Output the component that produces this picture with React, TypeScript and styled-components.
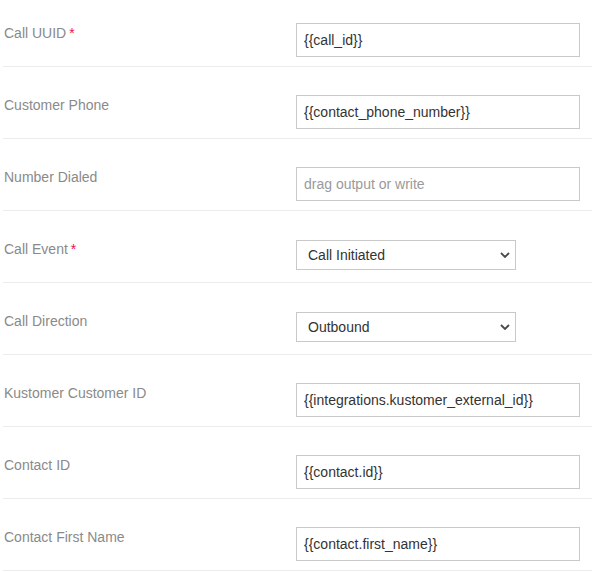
import React from "react";
import styled, { createGlobalStyle } from "styled-components";

const GlobalStyle = createGlobalStyle`
  html, body {
    margin: 0;
    padding: 0;
    background: #fff;
    font-family: "Liberation Sans", Arial, sans-serif;
    overflow: hidden;
  }
`;

const Form = styled.div`
  margin-top: -5px;
  margin-left: 3px;
  width: 589px;
`;

const Row = styled.div`
  display: flex;
  align-items: flex-start;
  box-sizing: border-box;
  height: 72px;
  padding: 28px 12px 0 1px;
  border-bottom: 1px solid #ececec;
`;

const Label = styled.label`
  width: 292px;
  flex-shrink: 0;
  font-size: 14px;
  line-height: 20px;
  color: #8a8a8a;
`;

const Required = styled.span`
  color: #e8114c;
  margin-left: 3px;
`;

const TextInput = styled.input`
  box-sizing: border-box;
  width: 284px;
  height: 34px;
  padding: 0 7px;
  border: 1px solid #c9c9c9;
  border-radius: 0;
  font-family: inherit;
  font-size: 14px;
  color: #333;
  background: #fff;
  outline: none;

  &::placeholder {
    color: #9a9a9a;
  }
`;

const SelectWrap = styled.div`
  position: relative;
  margin-top: 1px;
  width: 220px;
`;

const Select = styled.select`
  box-sizing: border-box;
  width: 220px;
  height: 30px;
  padding: 0 24px 0 11px;
  border: 1px solid #c9c9c9;
  border-radius: 0;
  font-family: inherit;
  font-size: 14px;
  color: #333;
  background: #fff;
  appearance: none;
  outline: none;
`;

const Chevron = styled.svg`
  position: absolute;
  right: 6px;
  top: 12px;
  pointer-events: none;
`;

type Field =
  | { label: string; required?: boolean; kind: "text"; value?: string; placeholder?: string }
  | { label: string; required?: boolean; kind: "select"; value: string; options: string[] };

const fields: Field[] = [
  { label: "Call UUID", required: true, kind: "text", value: "{{call_id}}" },
  { label: "Customer Phone", kind: "text", value: "{{contact_phone_number}}" },
  { label: "Number Dialed", kind: "text", placeholder: "drag output or write" },
  {
    label: "Call Event",
    required: true,
    kind: "select",
    value: "Call Initiated",
    options: ["Call Initiated", "Call Answered", "Call Ended"],
  },
  {
    label: "Call Direction",
    kind: "select",
    value: "Outbound",
    options: ["Inbound", "Outbound"],
  },
  { label: "Kustomer Customer ID", kind: "text", value: "{{integrations.kustomer_external_id}}" },
  { label: "Contact ID", kind: "text", value: "{{contact.id}}" },
  { label: "Contact First Name", kind: "text", value: "{{contact.first_name}}" },
];

const App: React.FC = () => {
  return (
    <>
      <GlobalStyle />
      <Form>
        {fields.map((f) => (
          <Row key={f.label}>
            <Label>
              {f.label}
              {f.required && <Required>*</Required>}
            </Label>
            {f.kind === "text" ? (
              <TextInput defaultValue={f.value} placeholder={f.placeholder} />
            ) : (
              <SelectWrap>
                <Select defaultValue={f.value}>
                  {f.options.map((o) => (
                    <option key={o}>{o}</option>
                  ))}
                </Select>
                <Chevron width="10" height="6" viewBox="0 0 10 6">
                  <path d="M1 1l4 4 4-4" fill="none" stroke="#4a4a4a" strokeWidth="1.8" />
                </Chevron>
              </SelectWrap>
            )}
          </Row>
        ))}
      </Form>
    </>
  );
};

export default App;
